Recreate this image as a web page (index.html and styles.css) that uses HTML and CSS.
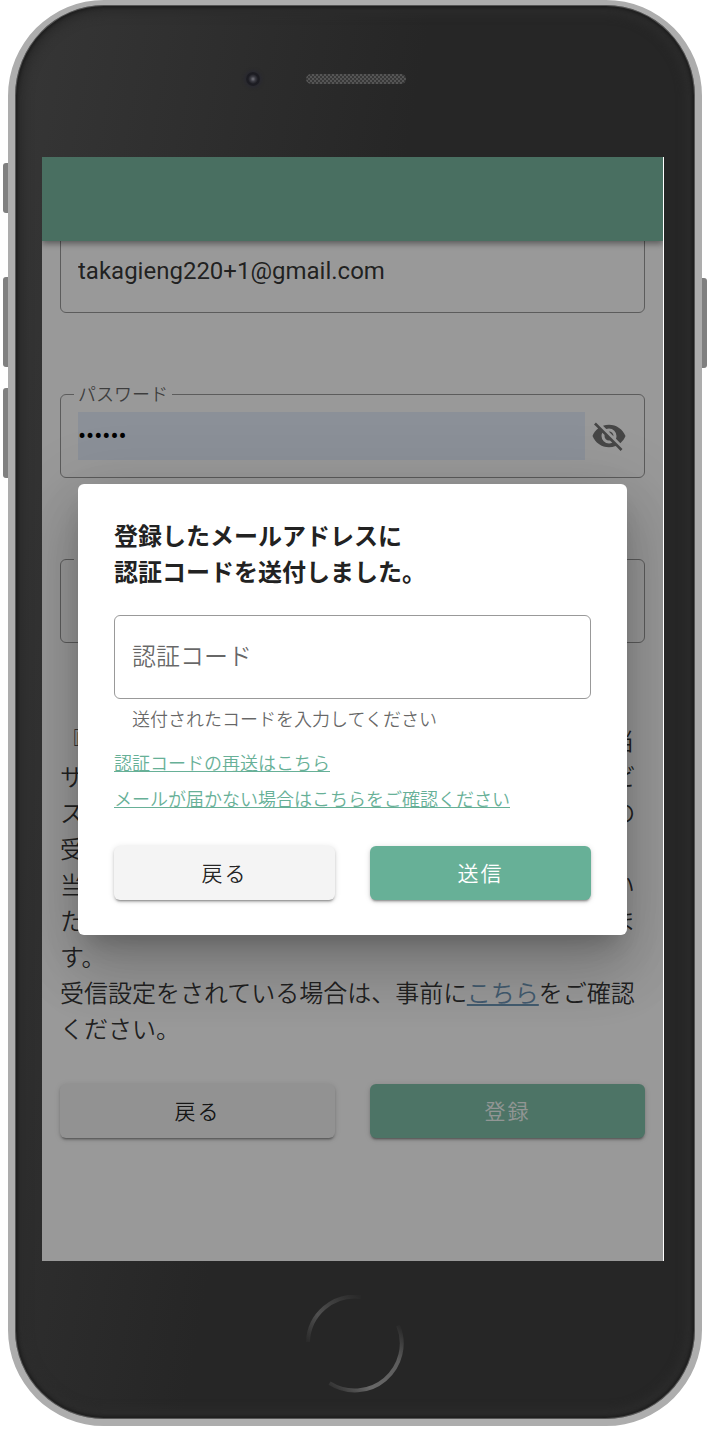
FILE: index.html
```
<!DOCTYPE html>
<html lang="ja">
<head>
  <meta charset="UTF-8" />
  <meta name="viewport" content="width=device-width, initial-scale=1.0"/>
  <title>認証コードの入力</title>
  <link rel="stylesheet" href="styles.css">
</head>
<body>

  <div class="phone">
    <!-- Side keys -->
    <span class="key key-mute"></span>
    <span class="key key-up"></span>
    <span class="key key-down"></span>
    <span class="key key-power"></span>

    <div class="phone-top">
      <span class="camera"></span>
      <span class="speaker"></span>
    </div>

    <div class="screen">
      <header class="app-bar"></header>

      <!-- Sign up form -->
      <main class="content">
        <form class="signup">
          <div class="field">
            <input class="field-input" type="email" aria-label="メールアドレス" value="takagieng220+1@gmail.com" />
          </div>
          <div class="field">
            <label class="field-label" for="password">パスワード</label>
            <input class="field-input autofill" type="password" id="password" value="secret" />
            <button class="icon-btn" type="button" aria-label="パスワードを表示">
              <svg viewBox="0 0 24 24"><path d="M11.83,9L15,12.16C15,12.11 15,12.05 15,12A3,3 0 0,0 12,9C11.94,9 11.89,9 11.83,9M7.53,9.8L9.08,11.35C9.03,11.56 9,11.77 9,12A3,3 0 0,0 12,15C12.22,15 12.44,14.97 12.65,14.92L14.2,16.45C13.53,16.78 12.79,17 12,17A5,5 0 0,1 7,12C7,11.21 7.2,10.47 7.53,9.8M2,4.27L4.28,6.55L4.73,7C3.08,8.3 1.78,10 1,12C2.73,16.39 7,19.5 12,19.5C13.55,19.5 15.03,19.2 16.38,18.66L16.81,19.08L19.73,22L21,20.73L3.27,3M12,7A5,5 0 0,1 17,12C17,12.64 16.87,13.26 16.64,13.82L19.57,16.75C21.07,15.5 22.27,13.86 23,12C21.27,7.61 17,4.5 12,4.5C10.6,4.5 9.26,4.75 8,5.2L10.17,7.35C10.74,7.13 11.35,7 12,7Z"/></svg>
            </button>
          </div>
          <div class="field">
            <label class="field-label" for="password-confirm">パスワード確認</label>
            <input class="field-input" type="password" id="password-confirm" />
          </div>

          <p class="notice">『迷惑メール対策』などの受信設定をしていると、当サイトからの確認メールが届かない場合、各社サービスの設定でドメイン指定受信の許可をしたうえでその受信設定をお願いいたします。<br />当サイトのメールアドレスを受信できる状態にしていただくようにご設定の変更と内容の確認をお願いします。<br />受信設定をされている場合は、事前に<a href="#">こちら</a>をご確認ください。</p>

          <div class="actions">
            <button class="btn" type="button">戻る</button>
            <button class="btn btn-muted" type="submit">登録</button>
          </div>
        </form>
      </main>

      <!-- Verification code dialog -->
      <div class="backdrop">
        <form class="dialog" role="dialog" aria-labelledby="dialog-title">
          <h2 id="dialog-title">登録したメールアドレスに<br />認証コードを送付しました。</h2>
          <div class="field">
            <input class="field-input" type="text" aria-label="認証コード" placeholder="認証コード" />
          </div>
          <p class="hint">送付されたコードを入力してください</p>
          <ul class="links">
            <li><a href="#">認証コードの再送はこちら</a></li>
            <li><a href="#">メールが届かない場合はこちらをご確認ください</a></li>
          </ul>
          <div class="actions">
            <button class="btn" type="button">戻る</button>
            <button class="btn btn-primary" type="submit">送信</button>
          </div>
        </form>
      </div>
    </div>

    <div class="phone-bottom">
      <svg class="home" viewBox="0 0 100 100">
        <defs>
          <linearGradient id="arc-top" x1="0" y1="1" x2="1" y2="0">
            <stop offset="0" stop-color="#2a2a2a"/>
            <stop offset="0.4" stop-color="#505050"/>
            <stop offset="1" stop-color="#282828"/>
          </linearGradient>
          <linearGradient id="arc-bottom" x1="0" y1="1" x2="1" y2="0">
            <stop offset="0" stop-color="#2a2a2a"/>
            <stop offset="0.3" stop-color="#686868"/>
            <stop offset="0.7" stop-color="#5c5c5c"/>
            <stop offset="1" stop-color="#262626"/>
          </linearGradient>
        </defs>
        <path d="M2 48A48 48 0 0 1 56 2" stroke="url(#arc-top)"/>
        <path d="M24 90A48 48 0 0 0 94 31" stroke="url(#arc-bottom)"/>
      </svg>
    </div>
  </div>

</body>
</html>
```

FILE: styles.css
```
* {
  box-sizing: border-box;
}
body {
  font-family: Roboto, "Noto Sans CJK JP", sans-serif;
  font-size: 24px;
  line-height: 36px;
  font-weight: 350;
  color: rgba(0, 0, 0, 0.8);
  background: #fff;
  margin: 0;
}
h2, p, ul {
  margin: 0;
  padding: 0;
}
button, input {
  font-family: inherit;
  font-weight: inherit;
}

/* Phone frame */
.phone {
  position: relative;
  margin: 0 12px 6px 8px;
  padding: 0 31px 0 27px;
  border: 7px solid #adadad;
  border-top-width: 5px;
  border-radius: 96px;
  background: linear-gradient(100deg, #363636 0%, #262626 45%) #262626;
  box-shadow: inset 0 0 0 1px #555, inset 0 0 3px 3px #1e1e1e, inset 0 0 10px 9px #2c2c2c;
}
.key {
  position: absolute;
  left: -12px;
  width: 5px;
  height: 90px;
  background: #808080;
  border-radius: 3px 0 0 3px;
}
.key-mute {
  top: 158px;
  height: 50px;
}
.key-up {
  top: 272px;
}
.key-down {
  top: 383px;
}
.key-power {
  top: 273px;
  left: auto;
  right: -12px;
  border-radius: 0 3px 3px 0;
}
.phone-top {
  display: grid;
  grid-template-columns: 1fr 100px 1fr;
  align-items: center;
  height: 152px;
  padding: 0 0 5px 6px;
}
.camera {
  justify-self: end;
  width: 14px;
  height: 14px;
  margin-right: 46px;
  border-radius: 50%;
  background: radial-gradient(circle, #77777f 0, #3c3c44 25%, #1c1c22 50%, #1e1e25 100%);
  box-shadow: 0 0 3px 2px #292930;
}
.speaker {
  height: 10px;
  border-radius: 5px;
  background: repeating-conic-gradient(#555 0 25%, #383838 0 50%) 0 0 / 4px 4px;
}
.phone-bottom {
  display: flex;
  justify-content: center;
  padding: 34px 0 26px 4px;
}
.home {
  width: 98px;
  height: 98px;
  fill: none;
  stroke-width: 4;
}

/* Screen */
.screen {
  position: relative;
  overflow: hidden;
  background: #fff;
  border-right: 1px solid #fff;
}
.app-bar {
  position: relative;
  z-index: 1;
  height: 84px;
  background: #7ab9a2;
  box-shadow: 0 3px 6px rgba(0, 0, 0, 0.3), 0 0 8px rgba(0, 0, 0, 0.2);
}
.content {
  margin-top: -12px;
  padding: 0 18px 123px;
}

/* Text fields */
.field {
  position: relative;
  display: flex;
  align-items: center;
  height: 84px;
  padding: 0 17px;
  border: 1px solid #999;
  border-radius: 6px;
}
.signup .field {
  margin-bottom: 81px;
}
.field-label {
  position: absolute;
  top: -14px;
  left: 13px;
  padding: 0 4px;
  font-size: 18px;
  line-height: 28px;
  color: rgba(0, 0, 0, 0.6);
  background: #fff;
}
.field-input {
  flex: 1;
  min-width: 0;
  height: 48px;
  padding: 0;
  border: none;
  outline: none;
  background: transparent;
  font-size: 24px;
  font-weight: 400;
  color: inherit;
}
.field-input::placeholder {
  font-weight: 350;
  color: rgba(0, 0, 0, 0.6);
}
.autofill {
  background: #e8f0fe;
  color: #000;
}
.icon-btn {
  display: flex;
  margin-left: 6px;
  padding: 0;
  border: none;
  background: none;
  cursor: pointer;
}
.icon-btn svg {
  width: 36px;
  height: 36px;
  fill: #757575;
}

.notice {
  margin-bottom: 36px;
}
.notice a {
  color: #7099bb;
}

/* Buttons */
.actions {
  display: grid;
  grid-template-columns: 1fr 1fr;
  gap: 35px;
}
.btn {
  height: 54px;
  padding: 0 0 2px;
  border: none;
  border-radius: 6px;
  background: #f4f4f4;
  color: rgba(0, 0, 0, 0.87);
  font-size: 21px;
  letter-spacing: 2px;
  box-shadow: 0 3px 2px -2px rgba(0, 0, 0, 0.3), 0 2px 3px rgba(0, 0, 0, 0.16), 0 1px 6px rgba(0, 0, 0, 0.12);
  cursor: pointer;
}
.btn-muted {
  background: #80c1aa;
  color: #f4fbf8;
}
.btn-primary {
  background: #67b097;
  color: #fff;
}

/* Dialog */
.backdrop {
  position: absolute;
  inset: 0;
  z-index: 2;
  display: flex;
  align-items: center;
  padding: 0 36px;
  background: rgba(0, 0, 0, 0.4);
}
.dialog {
  flex: 1;
  padding: 35px 36px;
  border-radius: 6px;
  background: #fff;
  box-shadow: 0 16px 22px -10px rgba(0, 0, 0, 0.2), 0 36px 57px 4px rgba(0, 0, 0, 0.14), 0 14px 69px 12px rgba(0, 0, 0, 0.12);
}
.dialog h2 {
  margin-bottom: 24px;
  font-size: 24px;
  font-weight: bold;
  color: #222;
}
.hint {
  padding: 7px 18px 12px;
  font-size: 18px;
  line-height: 28px;
  color: rgba(0, 0, 0, 0.6);
}
.links {
  margin-bottom: 28px;
  list-style: none;
  font-size: 18px;
}
.links a {
  color: #67b097;
}
```
